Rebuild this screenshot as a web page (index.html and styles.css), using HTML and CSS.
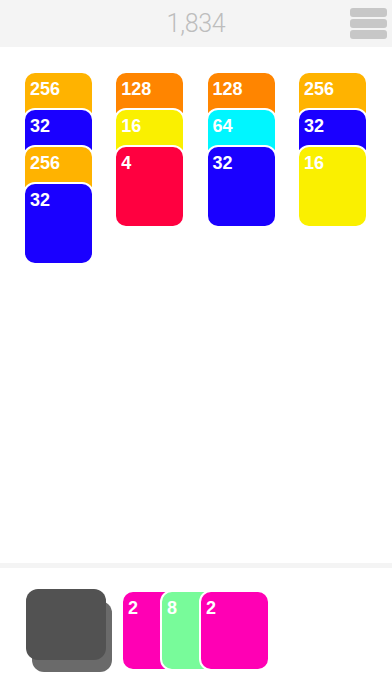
FILE: index.html
```html
<!DOCTYPE html>
<html>
<head>
<meta charset="utf-8">
<link rel="stylesheet" href="styles.css">
</head>
<body>
<div class="app">
  <header class="topbar">
    <div></div>
    <div class="score">1,834</div>
    <div class="menu"><span></span><span></span><span></span></div>
  </header>
  <main class="board">
    <div class="col">
      <div class="card c256">256</div>
      <div class="card c32">32</div>
      <div class="card c256">256</div>
      <div class="card c32">32</div>
    </div>
    <div class="col">
      <div class="card c128">128</div>
      <div class="card c16">16</div>
      <div class="card c4">4</div>
    </div>
    <div class="col">
      <div class="card c128">128</div>
      <div class="card c64">64</div>
      <div class="card c32">32</div>
    </div>
    <div class="col">
      <div class="card c256">256</div>
      <div class="card c32">32</div>
      <div class="card c16">16</div>
    </div>
  </main>
  <footer class="tray">
    <div class="deck"></div>
    <div class="hand">
      <div class="card hcard c2">2</div>
      <div class="card hcard c8">8</div>
      <div class="card hcard c2">2</div>
    </div>
  </footer>
</div>
</body>
</html>
```
FILE: styles.css
```css
* { box-sizing: border-box; }
html, body { margin: 0; padding: 0; background: #fff; }
body { font-family: "Liberation Sans", Arial, sans-serif; }
.app { width: 392px; height: 696px; display: flex; flex-direction: column; overflow: hidden; }
.topbar {
  height: 47px; background: #f4f4f4;
  display: grid; grid-template-columns: 1fr auto 1fr; align-items: start;
}
.score {
  font-family: Roboto, "Liberation Sans", sans-serif; font-weight: 300;
  font-size: 25px; color: #bdbdbd; line-height: 47px; letter-spacing: -0.3px;
}
.menu { justify-self: end; margin: 8px 5px 0 0; display: flex; flex-direction: column; gap: 2px; }
.menu span { display: block; width: 37px; height: 9px; background: #c7c7c7; border-radius: 3px; }
.board { flex: 1; display: flex; gap: 20.3px; padding: 24px 0 0 23px; }
.col { display: flex; flex-direction: column; width: 71px; }
.card {
  width: 71px; height: 83px; border: 2px solid #fff; border-radius: 12px;
  color: #fff; font-weight: bold; font-size: 18px; line-height: 20px;
  padding: 6px 0 0 5px; flex: none;
}
.col .card + .card { margin-top: -46px; }
.c256 { background: #ffb300; }
.c128 { background: #ff8500; }
.c64 { background: #00f6ff; }
.c32 { background: #1a00ff; }
.c16 { background: #faf000; }
.c4 { background: #ff0040; }
.c2 { background: #ff00b4; }
.c8 { background: #78fb9a; }
.tray {
  height: 133px; border-top: 5px solid #f4f4f4;
  display: flex; align-items: flex-start; padding: 21px 0 0 26px;
}
.deck {
  width: 80px; height: 71px; background: #525252; border-radius: 12px;
  box-shadow: 6px 12px 0 #6a6a6a;
}
.hand { display: flex; margin: 1px 0 0 15px; }
.hcard { height: 81px; }
.hand .hcard + .hcard { margin-left: -32px; }
```
